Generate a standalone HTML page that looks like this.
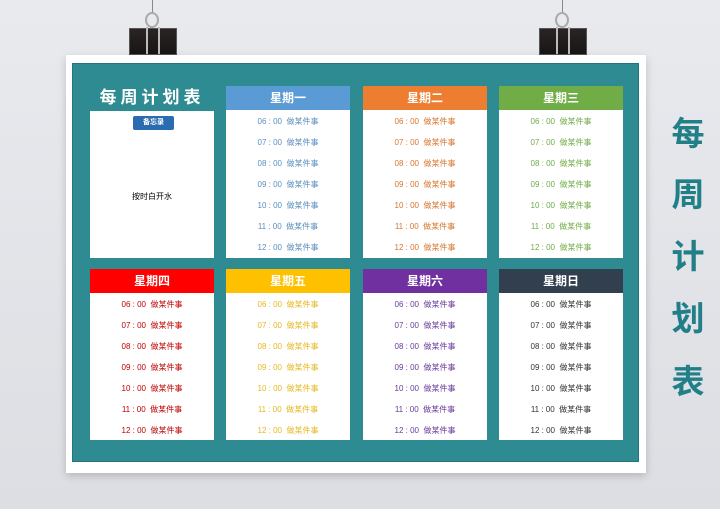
<!DOCTYPE html><html><head><meta charset="utf-8"><style>
*{margin:0;padding:0;box-sizing:border-box}
body{width:720px;height:509px;overflow:hidden;position:relative;background:linear-gradient(180deg,#e9eaee 0%,#dcdee3 100%);font-family:"Liberation Sans","Noto Sans CJK SC",sans-serif}
.paper{position:absolute;left:66px;top:55px;width:580px;height:418px;background:#fff;box-shadow:0 3px 8px rgba(0,0,0,.18)}
.teal{position:absolute;left:72px;top:63px;width:567px;height:399px;background:#2f8b92;border:1px solid #23757b}
.title{position:absolute;left:90px;top:83px;width:124px;text-align:center;color:#fff;font-weight:bold;font-size:17px;letter-spacing:4px}
.col{position:absolute;width:124px;background:#fff}
.hd{height:24px;color:#fff;font-weight:bold;font-size:12px;text-align:center;line-height:24px}
.it{font-size:8px;text-align:center;height:21px;line-height:21px}
.side{position:absolute;left:668px;width:40px;text-align:center;font-size:33px;font-weight:bold;color:#217f87}
.clip{position:absolute;top:28px;width:48px;height:27px;background:linear-gradient(#2a2424,#1a1515);border:1px solid #555}
.clip:before,.clip:after{content:"";position:absolute;top:-2px;width:2px;height:27px;background:#bbb}
.clip:before{left:16px}.clip:after{left:28px}
.wire{position:absolute;top:0;width:1px;height:14px;background:#888}
.ring{position:absolute;top:12px;width:14px;height:16px;border:2px solid #aaa;border-radius:50%}
</style></head><body>
<div class="wire" style="left:152px"></div><div class="ring" style="left:145px"></div><div class="clip" style="left:129px"></div>
<div class="wire" style="left:562px"></div><div class="ring" style="left:555px"></div><div class="clip" style="left:539px"></div>
<div class="paper"></div>
<div class="teal"></div>
<div class="title">每周计划表</div>
<div class="col" style="left:90px;top:111px;height:147px">
<div style="position:absolute;left:43px;top:5px;width:41px;height:14px;background:#2b6cb0;border-radius:2px;color:#fff;font-size:7px;text-align:center;line-height:14px;font-weight:bold">备忘录</div>
<div style="position:absolute;top:80px;width:124px;text-align:center;font-size:8px">按时白开水</div>
</div>
<div class="col" style="left:226px;top:86px;height:172px"><div class="hd" style="background:#5b9bd5">星期一</div><div style="color:#5b8fbf;padding-top:1px"><div class="it">06 : 00 &nbsp;做某件事</div><div class="it">07 : 00 &nbsp;做某件事</div><div class="it">08 : 00 &nbsp;做某件事</div><div class="it">09 : 00 &nbsp;做某件事</div><div class="it">10 : 00 &nbsp;做某件事</div><div class="it">11 : 00 &nbsp;做某件事</div><div class="it">12 : 00 &nbsp;做某件事</div></div></div>
<div class="col" style="left:363px;top:86px;height:172px"><div class="hd" style="background:#ed7d31">星期二</div><div style="color:#d8752e;padding-top:1px"><div class="it">06 : 00 &nbsp;做某件事</div><div class="it">07 : 00 &nbsp;做某件事</div><div class="it">08 : 00 &nbsp;做某件事</div><div class="it">09 : 00 &nbsp;做某件事</div><div class="it">10 : 00 &nbsp;做某件事</div><div class="it">11 : 00 &nbsp;做某件事</div><div class="it">12 : 00 &nbsp;做某件事</div></div></div>
<div class="col" style="left:499px;top:86px;height:172px"><div class="hd" style="background:#70ad47">星期三</div><div style="color:#70ad47;padding-top:1px"><div class="it">06 : 00 &nbsp;做某件事</div><div class="it">07 : 00 &nbsp;做某件事</div><div class="it">08 : 00 &nbsp;做某件事</div><div class="it">09 : 00 &nbsp;做某件事</div><div class="it">10 : 00 &nbsp;做某件事</div><div class="it">11 : 00 &nbsp;做某件事</div><div class="it">12 : 00 &nbsp;做某件事</div></div></div>
<div class="col" style="left:90px;top:269px;height:171px"><div class="hd" style="background:#ff0000">星期四</div><div style="color:#c00000;padding-top:1px"><div class="it">06 : 00 &nbsp;做某件事</div><div class="it">07 : 00 &nbsp;做某件事</div><div class="it">08 : 00 &nbsp;做某件事</div><div class="it">09 : 00 &nbsp;做某件事</div><div class="it">10 : 00 &nbsp;做某件事</div><div class="it">11 : 00 &nbsp;做某件事</div><div class="it">12 : 00 &nbsp;做某件事</div></div></div>
<div class="col" style="left:226px;top:269px;height:171px"><div class="hd" style="background:#ffc000">星期五</div><div style="color:#e6b820;padding-top:1px"><div class="it">06 : 00 &nbsp;做某件事</div><div class="it">07 : 00 &nbsp;做某件事</div><div class="it">08 : 00 &nbsp;做某件事</div><div class="it">09 : 00 &nbsp;做某件事</div><div class="it">10 : 00 &nbsp;做某件事</div><div class="it">11 : 00 &nbsp;做某件事</div><div class="it">12 : 00 &nbsp;做某件事</div></div></div>
<div class="col" style="left:363px;top:269px;height:171px"><div class="hd" style="background:#7030a0">星期六</div><div style="color:#6a3a9a;padding-top:1px"><div class="it">06 : 00 &nbsp;做某件事</div><div class="it">07 : 00 &nbsp;做某件事</div><div class="it">08 : 00 &nbsp;做某件事</div><div class="it">09 : 00 &nbsp;做某件事</div><div class="it">10 : 00 &nbsp;做某件事</div><div class="it">11 : 00 &nbsp;做某件事</div><div class="it">12 : 00 &nbsp;做某件事</div></div></div>
<div class="col" style="left:499px;top:269px;height:171px"><div class="hd" style="background:#323f4f">星期日</div><div style="color:#333;padding-top:1px"><div class="it">06 : 00 &nbsp;做某件事</div><div class="it">07 : 00 &nbsp;做某件事</div><div class="it">08 : 00 &nbsp;做某件事</div><div class="it">09 : 00 &nbsp;做某件事</div><div class="it">10 : 00 &nbsp;做某件事</div><div class="it">11 : 00 &nbsp;做某件事</div><div class="it">12 : 00 &nbsp;做某件事</div></div></div>
<div class="side" style="top:107px">每</div>
<div class="side" style="top:168px">周</div>
<div class="side" style="top:230px">计</div>
<div class="side" style="top:292px">划</div>
<div class="side" style="top:355px">表</div>
</body></html>
